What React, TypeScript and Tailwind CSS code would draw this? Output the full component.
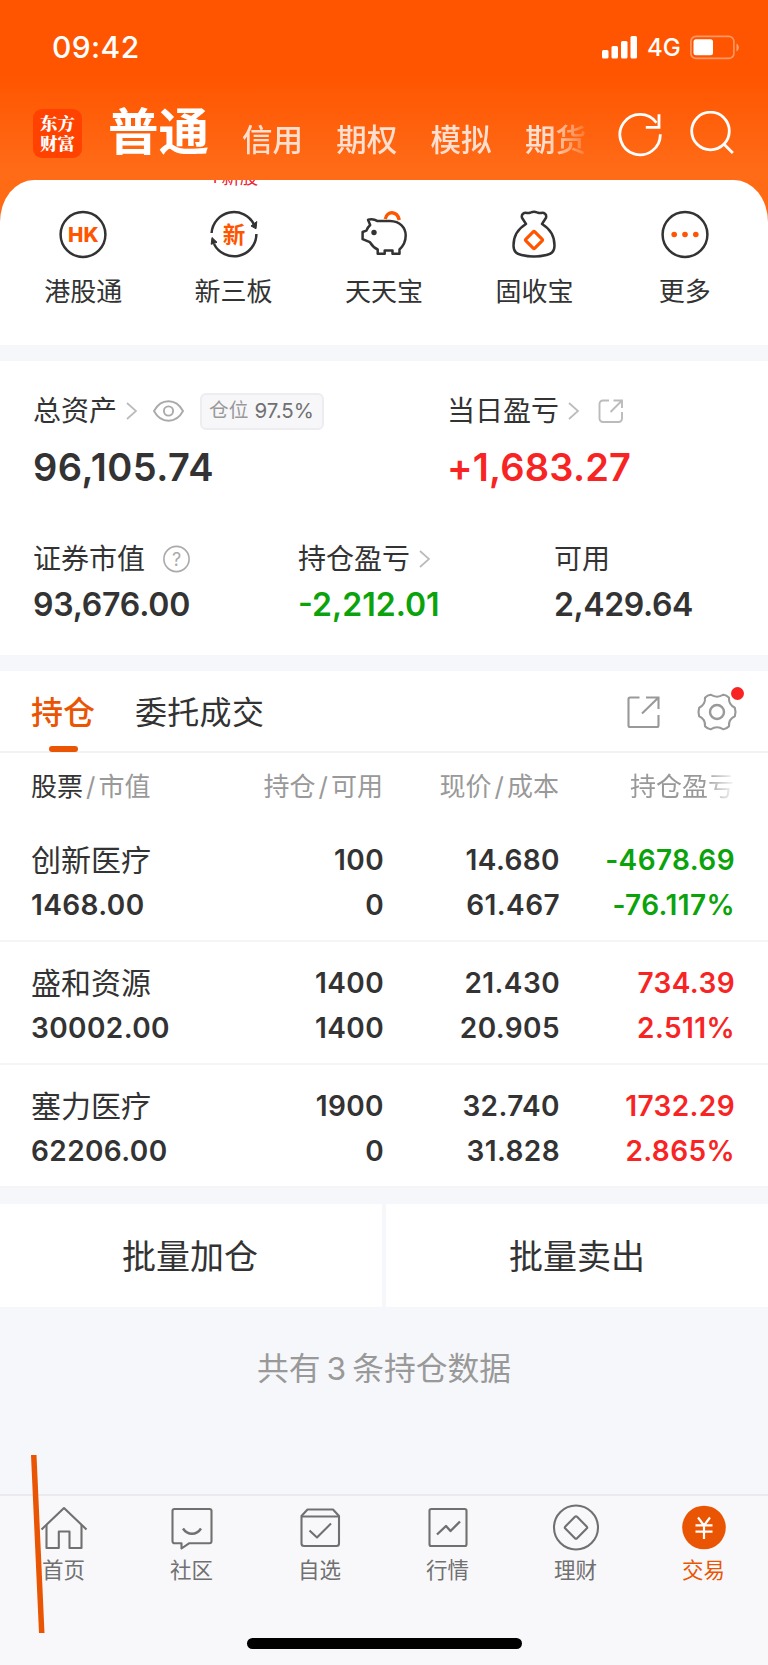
import React from 'react';

// =========================
// DATA
// =========================
interface Holding {
  name: string;
  value: string;
  qty: string;
  available: string;
  price: string;
  cost: string;
  profit: string;
  rate: string;
  up: boolean;
}

const holdings: Holding[] = [
  { name: '创新医疗', value: '1468.00', qty: '100', available: '0', price: '14.680', cost: '61.467', profit: '-4678.69', rate: '-76.117%', up: false },
  { name: '盛和资源', value: '30002.00', qty: '1400', available: '1400', price: '21.430', cost: '20.905', profit: '734.39', rate: '2.511%', up: true },
  { name: '塞力医疗', value: '62206.00', qty: '1900', available: '0', price: '32.740', cost: '31.828', profit: '1732.29', rate: '2.865%', up: true },
];

const accountTabs = ['信用', '期权', '模拟', '期货'];

// =========================
// SHORTCUT ICONS
// =========================
const HkIcon = () => (
  <svg width="52" height="52" viewBox="0 0 52 52" fill="none">
    <circle cx="26" cy="25.500" r="22.400" stroke="#333" strokeWidth="2.500" />
    <text x="26.300" y="33" textAnchor="middle" fontSize="20.500" fontWeight="800" fill="#ff5500">HK</text>
  </svg>
);

const NewBoardIcon = () => (
  <svg width="52" height="52" viewBox="0 0 52 52" fill="none" stroke="#333" strokeWidth="2.500">
    <path d="M3.600 24A22.400 22.400 0 0 1 46 15.500" />
    <path d="M48.400 25A22.400 22.400 0 0 1 6 35" />
    <path d="M43 17l5 2.800 .800-7.300z" fill="#333" strokeWidth="1" />
    <path d="M4 28.500l5 4.800-5.800 2z" fill="#333" strokeWidth="1" />
    <text x="26" y="33.500" textAnchor="middle" fontSize="22.500" fontWeight="700" fill="#ff5500" stroke="none">新</text>
  </svg>
);

const PiggyIcon = () => (
  <svg width="52" height="52" viewBox="0 0 52 52" fill="none" stroke="#333" strokeWidth="2.500" strokeLinejoin="round">
    <path d="M27.300 10C29 1.500 39 1.500 41.300 11" stroke="#ff5500" strokeWidth="3.400" />
    <path d="M10 10.800c3.400-1.200 6.600-.6 9.600 1.300H32c10 .3 15.700 6.500 15.700 14.400 0 6-2.500 10.500-6.200 14v4.200h-7v-3.300h-7.800v3.300h-7v-4.200c-3-1.300-5.600-3.900-7.800-7.300l-7.300-3V23l3.800-1.400c.8-2.200 2-4 3.800-5.600z" />
    <circle cx="16" cy="23.500" r="2.700" fill="#333" stroke="none" />
  </svg>
);

const BagIcon = () => (
  <svg width="52" height="52" viewBox="0 0 52 52" fill="none" stroke="#333" strokeWidth="2.500" strokeLinejoin="round">
    <path d="M18 15l-4-6.200c-1-3.500 2-5.500 5-4.800 1.800.4 2.500-.2 4-.6 2-.8 4-.8 6 0 1.500.4 2.200 1 4 .6 3-.7 6 1.300 5 4.800l-4 6.200c7.500 4.500 12.500 11.500 12.500 21.500 0 7-4 8.500-8 9.500-8 1.900-17 1.900-25 0-4-1-8-2.500-8-9.500 0-10 5-17 12.500-21.500z" />
    <rect x="19.700" y="24.700" width="12.600" height="12.600" rx="1.200" transform="rotate(45 26 31)" stroke="#ff5500" strokeWidth="3.200" />
  </svg>
);

const MoreIcon = () => (
  <svg width="52" height="52" viewBox="0 0 52 52" fill="none">
    <circle cx="26" cy="25.500" r="22.400" stroke="#333" strokeWidth="2.500" />
    <circle cx="15.200" cy="25.500" r="2.800" fill="#ff5500" />
    <circle cx="26" cy="25.500" r="2.800" fill="#ff5500" />
    <circle cx="36.800" cy="25.500" r="2.800" fill="#ff5500" />
  </svg>
);

const shortcuts = [
  { label: '港股通', icon: <HkIcon /> },
  { label: '新三板', icon: <NewBoardIcon /> },
  { label: '天天宝', icon: <PiggyIcon /> },
  { label: '固收宝', icon: <BagIcon /> },
  { label: '更多', icon: <MoreIcon /> },
];

const Chevron = () => (
  <svg width="12" height="18" viewBox="0 0 12 18" fill="none" stroke="#bbb" strokeWidth="1.700">
    <path d="M1 1l9 8-9 8" />
  </svg>
);

// =========================
// BOTTOM TAB ICONS
// =========================
const bottomTabs = [
  {
    label: '首页',
    icon: (
      <>
        <path d="M1.500 26.500L24 5l22.500 21.500" />
        <path d="M6.500 22v23h12.300V28.500h10.700V45h12V22" />
      </>
    ),
  },
  {
    label: '社区',
    icon: (
      <>
        <path d="M6.500 6h35a2 2 0 0 1 2 2v30.300a2 2 0 0 1-2 2H21l-7.500 5.200v-5.200h-7a2 2 0 0 1-2-2V8a2 2 0 0 1 2-2z" />
        <path d="M15 25.500c4.500 7 13.500 7 18 0" strokeWidth="2.400" />
      </>
    ),
  },
  {
    label: '自选',
    icon: (
      <>
        <path d="M5.500 13l6-6.500h25.500l6 6.500v27.500a2.500 2.500 0 0 1-2.500 2.500h-32.500a2.500 2.500 0 0 1-2.500-2.500z" />
        <path d="M5.500 13.500h37.500M13.500 27.500l7.500 7 14-14" />
      </>
    ),
  },
  {
    label: '行情',
    icon: (
      <>
        <rect x="5.500" y="6" width="37" height="37" rx="1.800" />
        <path d="M13 31.500l9-8.500 4.500 5L36 18.500" strokeWidth="2.400" />
      </>
    ),
  },
  {
    label: '理财',
    icon: (
      <>
        <circle cx="24" cy="24.500" r="22" />
        <rect x="15.700" y="16.200" width="16.600" height="16.600" rx="1.500" transform="rotate(45 24 24.500)" />
      </>
    ),
  },
  {
    label: '交易',
    active: true,
    icon: (
      <>
        <circle cx="24" cy="24.500" r="21.800" fill="#ea5504" stroke="none" />
        <path d="M18 14.500l6 8 6-8M24 22.500V36M15.500 22.300h17M15.500 28.700h17" stroke="#fff" strokeWidth="2.200" />
      </>
    ),
  },
];

// =========================
// SECTIONS
// =========================
const StatusBar = () => (
  <div className="flex h-[94px] items-center justify-between pr-[28px] pl-[52px] text-white">
    <span className="text-[30px] leading-none font-medium tracking-[0.4px]">09:42</span>
    <div className="flex items-center">
      <svg width="36" height="23" viewBox="0 0 36 23" fill="#fff">
        <rect x="0" y="14" width="6.500" height="8.500" rx="1.500" />
        <rect x="9.500" y="10" width="6.500" height="12.500" rx="1.500" />
        <rect x="19" y="5" width="6.500" height="17.500" rx="1.500" />
        <rect x="28.500" y="0" width="6.500" height="22.500" rx="1.500" />
      </svg>
      <span className="ml-[9px] w-[43px] pt-[2px] text-[24px] leading-none font-medium">4G</span>
      <svg width="50" height="25" viewBox="0 0 50 25" fill="none">
        <rect x="0.900" y="1.400" width="43" height="22" rx="5" stroke="#fff" strokeOpacity="0.400" strokeWidth="1.600" />
        <rect x="3.500" y="4.200" width="19.500" height="16" rx="2.500" fill="#fff" />
        <path d="M46.500 8.500v8c3-1.500 3-6.500 0-8z" fill="#fff" fillOpacity="0.450" />
      </svg>
    </div>
  </div>
);

const AccountNav = () => (
  <div className="flex h-[86px] items-center pl-[33px]">
    <div className="mt-[-7px] flex h-[49px] w-[49px] shrink-0 flex-col items-center justify-center rounded-[9px] bg-[#ff4200] pb-[2px] font-['Noto_Serif_CJK_SC','Noto_Sans_CJK_SC',serif] text-[17.500px] leading-[19.500px] font-black text-white">
      <span>东方</span>
      <span>财富</span>
    </div>
    <div className="flex h-[86px] w-[507px] items-center mask-[linear-gradient(to_right,#000_465px,transparent_512px)]">
      <span className="mt-[-10px] ml-[26px] w-[134px] shrink-0 text-[50.500px] leading-[60px] font-bold text-white">普通</span>
      {accountTabs.map((tab) => (
        <span key={tab} className="mt-[6px] w-[94.300px] shrink-0 text-[30.500px] leading-[40px] font-medium text-[#ffe0d0]">
          {tab}
        </span>
      ))}
    </div>
    <svg className="mt-[-6px] ml-[29px] shrink-0" width="46" height="46" viewBox="0 0 46 46" fill="none" stroke="#fff" strokeWidth="2.800">
      <path d="M42.300 23.200A20.200 20.200 0 1 1 38.500 11.800" />
      <path d="M41 3.200v13.100H27.800" />
    </svg>
    <svg className="mt-[-6px] ml-[26px] shrink-0" width="46" height="46" viewBox="0 0 46 46" fill="none" stroke="#fff" strokeWidth="2.800">
      <circle cx="20.500" cy="20" r="18.800" />
      <path d="M33.300 32.500l9.500 9.500" />
    </svg>
  </div>
);

const Shortcuts = () => (
  <div className="bg-[#ff6b15]">
    <div className="relative h-[165px] overflow-hidden rounded-t-[34px_42px] bg-white px-2 pt-[29px]">
      <span className="absolute top-[-14px] left-[209px] text-[18.500px] leading-[22px] text-[#ee2233]">+新股</span>
      <div className="grid grid-cols-5">
        {shortcuts.map((s) => (
          <div key={s.label} className="flex flex-col items-center">
            {s.icon}
            <span className="mt-[13px] text-[26px] leading-[36px] text-[#333]">{s.label}</span>
          </div>
        ))}
      </div>
    </div>
  </div>
);

const Assets = () => (
  <div className="h-[294px] bg-white pt-8 pl-[33px]">
    <div className="flex">
      <div className="w-[414px]">
        <div className="flex h-9 items-center text-[28px] text-[#333]">
          <span className="w-[93px] leading-9">总资产</span>
          <Chevron />
          <svg className="ml-[15px]" width="31" height="22" viewBox="0 0 31 22" fill="none" stroke="#aaa" strokeWidth="1.900">
            <path d="M1 11C8-2 23-2 30 11 23 24 8 24 1 11z" />
            <circle cx="15.500" cy="11" r="4.600" />
          </svg>
          <div className="ml-[16px] flex h-[37px] w-[124px] items-center rounded-[6px] border-2 border-[#ededf1] bg-[#f7f7fa] pl-[7px]">
            <span className="text-[19.700px] leading-none text-[#999]">仓位</span>
            <span className="ml-[6px] text-[20.500px] leading-none text-[#707070]">97.5%</span>
          </div>
        </div>
        <p className="mt-[18px] text-[38px] leading-10 font-semibold tracking-[0.500px] text-[#333]">96,105.74</p>
      </div>
      <div>
        <div className="flex h-9 items-center text-[28px] text-[#333]">
          <span className="w-[121px] leading-9">当日盈亏</span>
          <Chevron />
          <svg className="ml-[18px]" width="26" height="26" viewBox="0 0 26 26" fill="none" stroke="#bbb" strokeWidth="1.900">
            <path d="M11 2.500H5a3.500 3.500 0 0 0-3.500 3.500v14.500A3.500 3.500 0 0 0 5 24h15.500a3.500 3.500 0 0 0 3.500-3.500V14" />
            <path d="M15.500 2.500H24V10M24 2.500L12.500 14" />
          </svg>
        </div>
        <p className="mt-[18px] text-[38px] leading-10 font-semibold tracking-[0.200px] text-[#f82424]">+1,683.27</p>
      </div>
    </div>
    <div className="mt-[54px] flex">
      <div className="w-[265px]">
        <div className="flex h-9 items-center text-[28px] text-[#333]">
          <span className="w-[129px] leading-9">证券市值</span>
          <svg width="29" height="29" viewBox="0 0 29 29" fill="none">
            <circle cx="14.500" cy="14" r="12.600" stroke="#aaa" strokeWidth="1.600" />
            <text x="14.500" y="20.500" textAnchor="middle" fontSize="18" fill="#aaa">?</text>
          </svg>
        </div>
        <p className="mt-[10px] text-[32px] leading-9 font-semibold tracking-[-0.200px] text-[#333]">93,676.00</p>
      </div>
      <div className="w-[256px]">
        <div className="flex h-9 items-center text-[28px] text-[#333]">
          <span className="w-[121px] leading-9">持仓盈亏</span>
          <Chevron />
        </div>
        <p className="mt-[10px] text-[32px] leading-9 font-semibold text-[#0ba30b]">-2,212.01</p>
      </div>
      <div>
        <p className="text-[28px] leading-9 text-[#333]">可用</p>
        <p className="mt-[10px] text-[32px] leading-9 font-semibold tracking-[-0.400px] text-[#333]">2,429.64</p>
      </div>
    </div>
  </div>
);

const HoldingTabs = () => (
  <div className="flex h-[82px] border-b-2 border-[#f2f2f4] bg-white pl-[31px] text-[32px] leading-[84px]">
    <div className="relative w-[104px] font-medium text-[#ea5504]">
      持仓
      <span className="absolute bottom-[-1px] left-[18px] h-[6px] w-[29px] rounded-[3px] bg-[#ea5504]" />
    </div>
    <span className="tracking-[0.300px] text-[#333]">委托成交</span>
    <div className="ml-auto flex items-center pt-[2px] pr-[28px]">
      <svg width="34" height="34" viewBox="0 0 34 34" fill="none" stroke="#999" strokeWidth="2.100">
        <path d="M13.500 2.500H4a1.500 1.500 0 0 0-1.500 1.500v26.500a1.500 1.500 0 0 0 1.500 1.500h27a1.500 1.500 0 0 0 1.500-1.500V20" />
        <path d="M20 2.500h12.500V14M32.500 2.500L16 18.500" />
      </svg>
      <div className="relative ml-[36px]">
        <svg width="44" height="40" viewBox="0 0 44 40" fill="none" stroke="#999" strokeWidth="2.100" strokeLinejoin="round">
          <path d="M14.500 2.700q3.500 2 6.500 2T27.500 2.700q3 .3 5.500 3c-.4 5 1.600 8 5.800 10q1.400 4.300 0 8.600c-4.200 2-6.200 5-5.800 10q-2.500 2.700-5.500 3-3.500-2-6.500-2t-6.500 2q-3-.3-5.500-3c.4-5-1.600-8-5.800-10q-1.400-4.300 0-8.600c4.200-2 6.200-5 5.800-10q2.500-2.700 5.500-3z" />
          <circle cx="21" cy="20" r="7" strokeWidth="2.400" />
        </svg>
        <span className="absolute top-[-5px] right-[-4px] h-[13px] w-[13px] rounded-full bg-[#f82424]" />
      </div>
    </div>
  </div>
);

const HoldingTable = () => (
  <div className="bg-white pt-[2px]">
    {/* HEADER */}
    <div className="grid h-[64px] grid-cols-[181px_171px_176px_175px] items-center pb-[2px] pl-[31px] text-right text-[26px] text-[#999]">
      <span className="text-left">
        <span className="text-[#333]">股票</span>
        <span className="mx-[3px]">/</span>市值
      </span>
      <span>持仓<span className="mx-[3px]">/</span>可用</span>
      <span>现价<span className="mx-[3px]">/</span>成本</span>
      <span className="mask-[linear-gradient(to_right,#000_145px,transparent_178px)]">持仓盈亏</span>
    </div>

    {/* ROWS */}
    {holdings.map((h) => (
      <div
        key={h.name}
        className="grid h-[123px] grid-cols-[181px_172px_176px_175px] border-b-2 border-[#f5f5f7] pt-[19px] pl-[31px] text-right text-[28px] leading-[44.500px] font-semibold tracking-[0.400px] text-[#333]"
      >
        <div className="text-left">
          <p className="text-[30px] font-normal tracking-normal">{h.name}</p>
          <p>{h.value}</p>
        </div>
        <div>
          <p>{h.qty}</p>
          <p>{h.available}</p>
        </div>
        <div>
          <p>{h.price}</p>
          <p>{h.cost}</p>
        </div>
        <div className={h.up ? 'text-[#f82424]' : 'text-[#0ba30b]'}>
          <p>{h.profit}</p>
          <p>{h.rate}</p>
        </div>
      </div>
    ))}
  </div>
);

const BottomBar = () => (
  <div className="relative flex h-[171px] flex-col border-t-2 border-[#ebebee] bg-[#f8f8fb]">
    <div className="grid grid-cols-6 pt-[7px]">
      {bottomTabs.map((tab) => (
        <div key={tab.label} className={tab.active ? 'flex flex-col items-center text-[#ea5504]' : 'flex flex-col items-center text-[#707070]'}>
          <svg width="48" height="49" viewBox="0 0 48 49" fill="none" stroke="#707070" strokeWidth="2.100" strokeLinejoin="round">
            {tab.icon}
          </svg>
          <span className="mt-[3px] mr-px text-[21.500px] leading-[30px]">{tab.label}</span>
        </div>
      ))}
    </div>
    <div className="mx-auto mt-auto mb-[16px] h-[11px] w-[275px] rounded-full bg-black" />
    {/* stray pen stroke over the first tab */}
    <svg className="absolute top-[-42px] left-[30px]" width="16" height="180" viewBox="0 0 16 180">
      <path d="M1 1h5.500l8 178H9z" fill="#ea5504" />
    </svg>
  </div>
);

export default function App() {
  return (
    <div className="flex h-[1665px] w-[768px] flex-col overflow-hidden bg-[#f6f7fa] font-['Inter','Noto_Sans_CJK_SC',sans-serif]">
      <div className="h-[180px] bg-[linear-gradient(#ff5500_75px,#ff6b17_170px)]">
        <StatusBar />
        <AccountNav />
      </div>
      <Shortcuts />
      <div className="h-4" />
      <Assets />
      <div className="h-4" />
      <HoldingTabs />
      <HoldingTable />
      <div className="h-4" />
      <div className="grid h-[103px] grid-cols-2 gap-1 text-center text-[34px] leading-[101px] text-[#333]">
        <button className="bg-white pt-[2px] pr-[2px]">批量加仓</button>
        <button className="bg-white pt-[2px]">批量卖出</button>
      </div>
      <p className="mt-[42px] text-center text-[31.800px] leading-[40px] text-[#999]">
        共有<span className="mx-[6px]">3</span>条持仓数据
      </p>
      <div className="mt-auto">
        <BottomBar />
      </div>
    </div>
  );
}
